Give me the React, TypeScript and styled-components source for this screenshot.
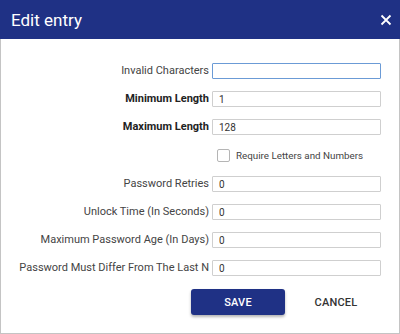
import {Fragment} from "react";
import styled, {createGlobalStyle} from "styled-components";

const GlobalStyle = createGlobalStyle`
    body {
        margin: 0;
        font-family: Roboto, "Liberation Sans", sans-serif;
        background: #ffffff;
    }
`;

const StyledDialog = styled.div`
    width: 400px;
    height: 334px;
    box-sizing: border-box;
    border: 1px solid #c4c4c4;
    border-top: none;
    background: #ffffff;
    display: flex;
    flex-direction: column;
`;

const StyledHeader = styled.header`
    height: 39px;
    margin: 0 -1px;
    background: #1f3185;
    color: #ffffff;
    display: flex;
    align-items: center;
    justify-content: space-between;
    padding: 0 8px 0 11px;
`;

const StyledTitle = styled.h1`
    margin: 0;
    font-size: 17px;
    font-weight: 400;
`;

const StyledClose = styled.button`
    background: none;
    border: none;
    padding: 0;
    width: 12px;
    height: 12px;
    cursor: pointer;
    display: flex;
`;

const StyledForm = styled.div`
    display: grid;
    grid-template-columns: 1fr 169px;
    column-gap: 3px;
    row-gap: 12px;
    padding: 24px 18px 0 0;
`;

const StyledLabel = styled.label<{$bold?: boolean}>`
    text-align: right;
    font-size: 11px;
    font-weight: ${(p) => (p.$bold ? 700 : 400)};
    color: ${(p) => (p.$bold ? "#222" : "#444")};
    line-height: 16px;
    white-space: nowrap;
`;

const StyledInput = styled.input<{$focused?: boolean}>`
    box-sizing: border-box;
    width: 169px;
    height: 16px;
    margin: 0;
    padding: 0 6px;
    border: 1px solid ${(p) => (p.$focused ? "#6b9bd6" : "#cfcfcf")};
    border-radius: 1px;
    font-family: Roboto, "Liberation Sans", sans-serif;
    font-size: 10px;
    color: #333;
    outline: none;
`;

const StyledCheckRow = styled.label`
    grid-column: 2;
    display: flex;
    align-items: center;
    gap: 6px;
    height: 17px;
    padding-left: 2px;
    margin-left: 3px;
    font-size: 9.8px;
    color: #444;
    white-space: nowrap;
`;

const StyledBox = styled.span`
    width: 13px;
    height: 13px;
    box-sizing: border-box;
    border: 1px solid #b5b5b5;
    border-radius: 2px;
    background: #fff;
`;

const StyledButtons = styled.div`
    display: flex;
    justify-content: flex-end;
    gap: 4px;
    padding: 13px 16px 0 0;
`;

const StyledButton = styled.button<{$primary?: boolean}>`
    width: 94px;
    height: 26px;
    border: none;
    border-radius: 3px;
    font-family: Roboto, "Liberation Sans", sans-serif;
    font-size: 11px;
    font-weight: 500;
    letter-spacing: 0.2px;
    cursor: pointer;
    background: ${(p) => (p.$primary ? "#1f3185" : "transparent")};
    color: ${(p) => (p.$primary ? "#ffffff" : "#333")};
    box-shadow: ${(p) => (p.$primary ? "0 2px 3px rgba(0,0,0,0.3)" : "none")};
`;

const fields = [
    {label: "Invalid Characters", value: "", bold: false, focused: true},
    {label: "Minimum Length", value: "1", bold: true, focused: false},
    {label: "Maximum Length", value: "128", bold: true, focused: false},
];

const numbers = [
    "Password Retries",
    "Unlock Time (In Seconds)",
    "Maximum Password Age (In Days)",
    "Password Must Differ From The Last N",
];

export default function App(){
    return(
        <>
            <GlobalStyle/>
            <StyledDialog>
                <StyledHeader>
                    <StyledTitle>Edit entry</StyledTitle>
                    <StyledClose aria-label="Close">
                        <svg width="12" height="12" viewBox="0 0 12 12">
                            <path d="M1.5 1.5L10.5 10.5M10.5 1.5L1.5 10.5" stroke="#fff" strokeWidth="1.8"/>
                        </svg>
                    </StyledClose>
                </StyledHeader>
                <StyledForm>
                    {fields.map((f) => (
                        <Fragment key={f.label}>
                            <StyledLabel $bold={f.bold}>{f.label}</StyledLabel>
                            <StyledInput $focused={f.focused} defaultValue={f.value}/>
                        </Fragment>
                    ))}
                    <StyledCheckRow>
                        <StyledBox/>
                        Require Letters and Numbers
                    </StyledCheckRow>
                    {numbers.map((n) => (
                        <Fragment key={n}>
                            <StyledLabel>{n}</StyledLabel>
                            <StyledInput defaultValue="0"/>
                        </Fragment>
                    ))}
                </StyledForm>
                <StyledButtons>
                    <StyledButton $primary>SAVE</StyledButton>
                    <StyledButton>CANCEL</StyledButton>
                </StyledButtons>
            </StyledDialog>
        </>
    );
}
